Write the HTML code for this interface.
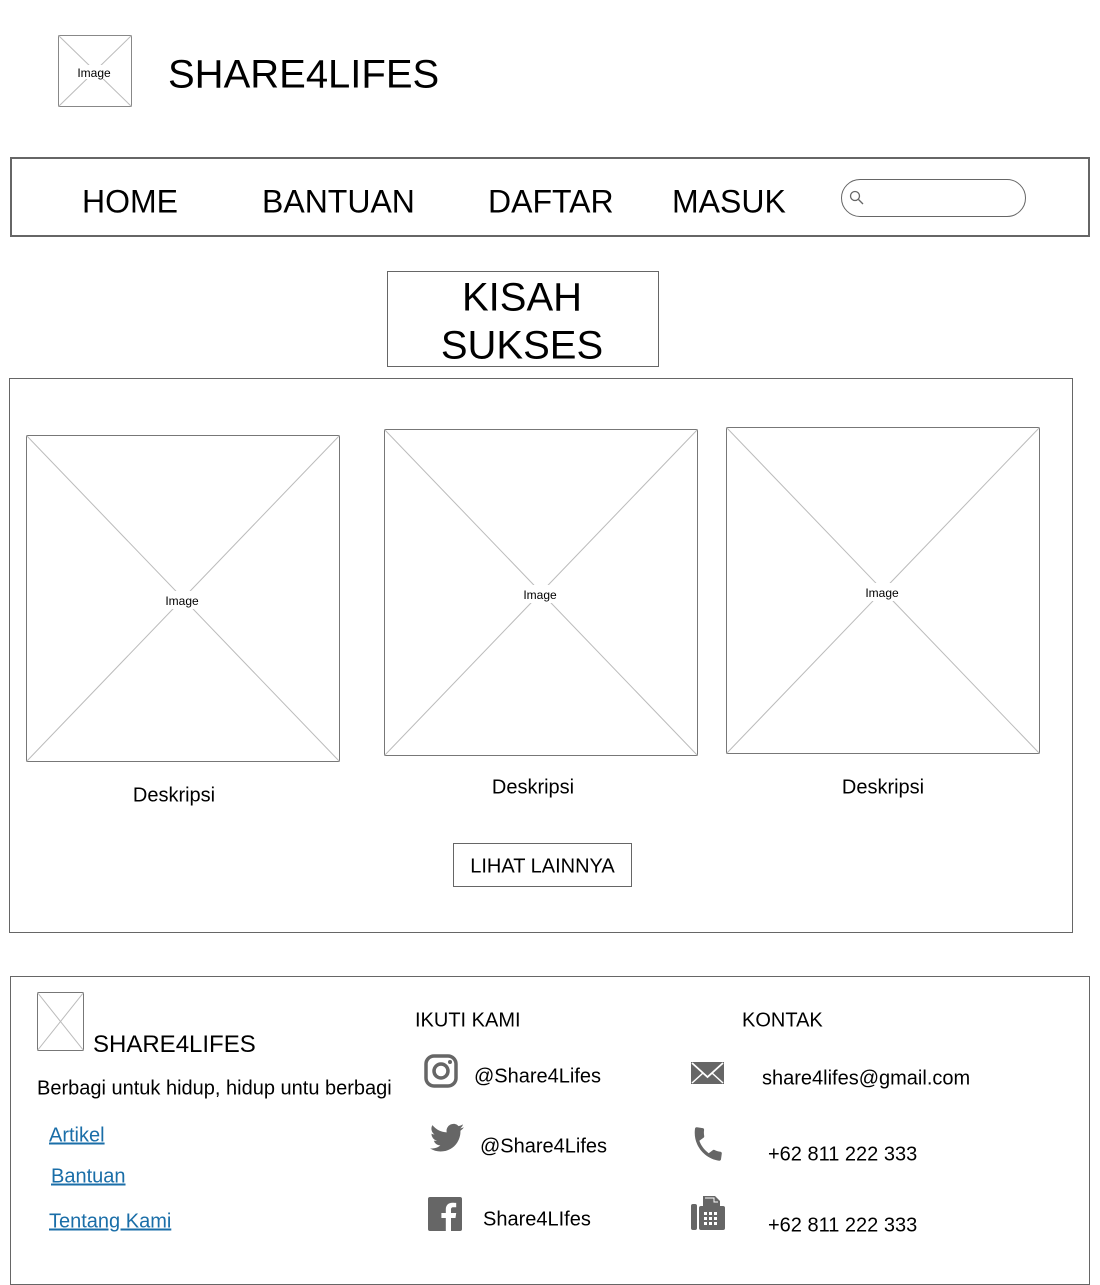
<!DOCTYPE html>
<html><head><meta charset="utf-8"><style>
body{margin:0;width:1100px;height:1285px;position:relative;background:#fff;font-family:"Liberation Sans",Arial,sans-serif;color:#000;overflow:hidden}
.t{position:absolute;white-space:nowrap;transform:translateY(calc(-50% + 2px))}
.box{position:absolute;box-sizing:border-box}
a{color:#1a6ea8;text-decoration:underline}
</style></head><body>
<svg class="box" style="left:58px;top:35px" width="74" height="72"><rect x="0.5" y="0.5" width="73" height="71" fill="#fff" stroke="#888"/><line x1="0" y1="0" x2="74" y2="72" stroke="#bbb"/><line x1="74" y1="0" x2="0" y2="72" stroke="#bbb"/><rect x="16" y="30" width="42" height="14" fill="#fff"/><text x="36" y="42" font-size="12" text-anchor="middle" font-family="Liberation Sans">Image</text></svg>
<div class="t" style="left:168px;top:73px;font-size:40px">SHARE4LIFES</div>

<div class="box" style="left:10px;top:157px;width:1080px;height:80px;border:2px solid #666"></div>
<div class="t" style="left:82px;top:200px;font-size:32px">HOME</div>
<div class="t" style="left:262px;top:200px;font-size:32px">BANTUAN</div>
<div class="t" style="left:488px;top:200px;font-size:32px">DAFTAR</div>
<div class="t" style="left:672px;top:200px;font-size:32px">MASUK</div>
<div class="box" style="left:841px;top:179px;width:185px;height:38px;border:1px solid #666;border-radius:19px"></div>
<svg class="box" style="left:849px;top:190px" width="16" height="16"><circle cx="6" cy="6" r="4.5" fill="none" stroke="#666" stroke-width="1.3"/><line x1="9.5" y1="9.5" x2="14" y2="14" stroke="#666" stroke-width="1.3"/></svg>

<div class="box" style="left:387px;top:271px;width:272px;height:96px;border:1px solid #666"></div>
<div class="t" style="left:386px;width:272px;text-align:center;top:296px;font-size:40px">KISAH</div>
<div class="t" style="left:386px;width:272px;text-align:center;top:344px;font-size:40px">SUKSES</div>

<div class="box" style="left:9px;top:378px;width:1064px;height:555px;border:1px solid #666"></div>

<svg class="box" style="left:26px;top:435px" width="314" height="327"><rect x="0.5" y="0.5" width="313" height="326" fill="#fff" stroke="#777"/><line x1="0" y1="0" x2="314" y2="327" stroke="#bbb"/><line x1="314" y1="0" x2="0" y2="327" stroke="#bbb"/><rect x="133" y="156" width="48" height="18" fill="#fff"/><text x="156" y="170" font-size="12" text-anchor="middle" font-family="Liberation Sans">Image</text></svg>
<svg class="box" style="left:384px;top:429px" width="314" height="327"><rect x="0.5" y="0.5" width="313" height="326" fill="#fff" stroke="#777"/><line x1="0" y1="0" x2="314" y2="327" stroke="#bbb"/><line x1="314" y1="0" x2="0" y2="327" stroke="#bbb"/><rect x="133" y="156" width="48" height="18" fill="#fff"/><text x="156" y="170" font-size="12" text-anchor="middle" font-family="Liberation Sans">Image</text></svg>
<svg class="box" style="left:726px;top:427px" width="314" height="327"><rect x="0.5" y="0.5" width="313" height="326" fill="#fff" stroke="#777"/><line x1="0" y1="0" x2="314" y2="327" stroke="#bbb"/><line x1="314" y1="0" x2="0" y2="327" stroke="#bbb"/><rect x="133" y="156" width="48" height="18" fill="#fff"/><text x="156" y="170" font-size="12" text-anchor="middle" font-family="Liberation Sans">Image</text></svg>

<div class="t" style="left:74px;width:200px;text-align:center;top:794px;font-size:20px">Deskripsi</div>
<div class="t" style="left:433px;width:200px;text-align:center;top:786px;font-size:20px">Deskripsi</div>
<div class="t" style="left:783px;width:200px;text-align:center;top:786px;font-size:20px">Deskripsi</div>

<div class="box" style="left:453px;top:843px;width:179px;height:44px;border:1px solid #666"></div>
<div class="t" style="left:453px;width:179px;text-align:center;top:865px;font-size:20px">LIHAT LAINNYA</div>

<div class="box" style="left:10px;top:976px;width:1080px;height:309px;border:1px solid #666"></div>
<svg class="box" style="left:37px;top:992px" width="47" height="59"><rect x="0.5" y="0.5" width="46" height="58" fill="#fff" stroke="#777"/><line x1="0" y1="0" x2="47" y2="59" stroke="#bbb"/><line x1="47" y1="0" x2="0" y2="59" stroke="#bbb"/></svg>
<div class="t" style="left:93px;top:1043px;font-size:24px">SHARE4LIFES</div>
<div class="t" style="left:37px;top:1087px;font-size:20px">Berbagi untuk hidup, hidup untu berbagi</div>
<div class="t" style="left:49px;top:1134px;font-size:20px"><a>Artikel</a></div>
<div class="t" style="left:51px;top:1175px;font-size:20px"><a>Bantuan</a></div>
<div class="t" style="left:49px;top:1220px;font-size:20px"><a>Tentang Kami</a></div>

<div class="t" style="left:415px;top:1019px;font-size:20px">IKUTI KAMI</div>
<div class="t" style="left:742px;top:1019px;font-size:20px">KONTAK</div>

<svg class="box" style="left:424px;top:1054px" width="34" height="34"><rect x="2" y="2" width="30" height="30" rx="8" fill="none" stroke="#666" stroke-width="3.5"/><circle cx="17" cy="17" r="7" fill="none" stroke="#666" stroke-width="3.5"/><circle cx="26" cy="8" r="2" fill="#666"/></svg>
<div class="t" style="left:474px;top:1075px;font-size:20px">@Share4Lifes</div>
<svg class="box" style="left:430px;top:1123px" width="34" height="30" viewBox="0 0 24 20"><path fill="#666" d="M24 2.4a9.8 9.8 0 0 1-2.8.8A4.9 4.9 0 0 0 23.3.4a9.9 9.9 0 0 1-3.1 1.2A4.9 4.9 0 0 0 11.8 6 14 14 0 0 1 1.7.9a4.9 4.9 0 0 0 1.5 6.6 4.9 4.9 0 0 1-2.2-.6 4.9 4.9 0 0 0 3.9 4.9 4.9 4.9 0 0 1-2.2.1 4.9 4.9 0 0 0 4.6 3.4A9.9 9.9 0 0 1 0 17.3 14 14 0 0 0 7.5 19.5c9.1 0 14-7.5 14-14v-.6A10 10 0 0 0 24 2.4z"/></svg>
<div class="t" style="left:480px;top:1145px;font-size:20px">@Share4Lifes</div>
<svg class="box" style="left:428px;top:1197px" width="34" height="34"><rect width="34" height="34" rx="2" fill="#666"/><path d="M23 34V21h4.5l.7-5H23v-3.2c0-1.5.4-2.5 2.5-2.5h2.7V5.9c-.5 0-2-.2-3.9-.2-3.9 0-6.5 2.4-6.5 6.7V16h-4.4v5h4.4v13z" fill="#fff"/></svg>
<div class="t" style="left:483px;top:1218px;font-size:20px">Share4LIfes</div>

<svg class="box" style="left:691px;top:1060px" width="34" height="24"><rect x="0" y="2" width="33" height="22" fill="#666"/><path d="M1 3 L16.5 17 L32 3" fill="none" stroke="#fff" stroke-width="1.8"/><path d="M1 23 L12 13 M32 23 L21 13" stroke="#fff" stroke-width="1.5"/></svg>
<div class="t" style="left:762px;top:1077px;font-size:20px">share4lifes@gmail.com</div>
<svg class="box" style="left:688px;top:1124px" width="40" height="40" viewBox="0 0 24 24"><path fill="#666" d="M6.6 10.8c1.4 2.8 3.8 5.1 6.6 6.6l2.2-2.2c.3-.3.7-.4 1-.2 1.1.4 2.3.6 3.6.6.6 0 1 .4 1 1V20c0 .6-.4 1-1 1C10.6 21 3 13.4 3 4c0-.6.4-1 1-1h3.5c.6 0 1 .4 1 1 0 1.3.2 2.5.6 3.6.1.3 0 .7-.2 1z" transform="rotate(8 12 12)"/></svg>
<div class="t" style="left:768px;top:1153px;font-size:20px">+62 811 222 333</div>
<svg class="box" style="left:691px;top:1196px" width="34" height="35"><rect x="0" y="8" width="6" height="26" rx="2" fill="#666"/><rect x="8" y="10" width="26" height="24" rx="2" fill="#666"/><path d="M12 0h12l5 5v8H12z" fill="#666"/><path d="M14 2h9v4h4" fill="none" stroke="#fff" stroke-width="1"/><g fill="#fff"><rect x="13" y="16" width="3" height="3"/><rect x="18" y="16" width="3" height="3"/><rect x="23" y="16" width="3" height="3"/><rect x="13" y="21" width="3" height="3"/><rect x="18" y="21" width="3" height="3"/><rect x="23" y="21" width="3" height="3"/><rect x="13" y="26" width="3" height="3"/><rect x="18" y="26" width="3" height="3"/><rect x="23" y="26" width="3" height="3"/></g></svg>
<div class="t" style="left:768px;top:1224px;font-size:20px">+62 811 222 333</div>
</body></html>
